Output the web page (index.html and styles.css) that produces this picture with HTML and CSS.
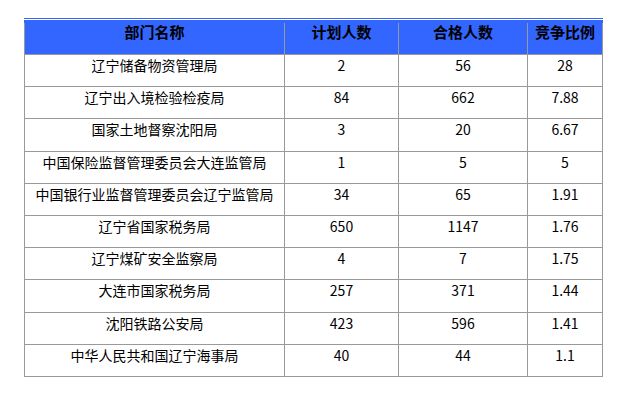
FILE: index.html
```html
<!DOCTYPE html>
<html lang="zh-CN">
<head>
<meta charset="utf-8">
<title>竞争比例</title>
<link rel="stylesheet" href="styles.css">
</head>
<body>
<div class="table">
  <div class="head">
    <div class="cell">部门名称</div>
    <div class="cell">计划人数</div>
    <div class="cell">合格人数</div>
    <div class="cell last">竞争比例</div>
  </div>
  <div class="row"><div class="cell">辽宁储备物资管理局</div><div class="cell">2</div><div class="cell">56</div><div class="cell last">28</div></div>
  <div class="row"><div class="cell">辽宁出入境检验检疫局</div><div class="cell">84</div><div class="cell">662</div><div class="cell last">7.88</div></div>
  <div class="row"><div class="cell">国家土地督察沈阳局</div><div class="cell">3</div><div class="cell">20</div><div class="cell last">6.67</div></div>
  <div class="row"><div class="cell">中国保险监督管理委员会大连监管局</div><div class="cell">1</div><div class="cell">5</div><div class="cell last">5</div></div>
  <div class="row"><div class="cell">中国银行业监督管理委员会辽宁监管局</div><div class="cell">34</div><div class="cell">65</div><div class="cell last">1.91</div></div>
  <div class="row"><div class="cell">辽宁省国家税务局</div><div class="cell">650</div><div class="cell">1147</div><div class="cell last">1.76</div></div>
  <div class="row"><div class="cell">辽宁煤矿安全监察局</div><div class="cell">4</div><div class="cell">7</div><div class="cell last">1.75</div></div>
  <div class="row"><div class="cell">大连市国家税务局</div><div class="cell">257</div><div class="cell">371</div><div class="cell last">1.44</div></div>
  <div class="row"><div class="cell">沈阳铁路公安局</div><div class="cell">423</div><div class="cell">596</div><div class="cell last">1.41</div></div>
  <div class="row"><div class="cell">中华人民共和国辽宁海事局</div><div class="cell">40</div><div class="cell">44</div><div class="cell last">1.1</div></div>
</div>
</body>
</html>
```
FILE: styles.css
```css
html, body {
  margin: 0;
  padding: 0;
  background: #ffffff;
}
body {
  padding: 18px 0 0 24px;
  font-family: "Noto Sans CJK SC", "Noto Sans", sans-serif;
  color: #000;
}
.table {
  width: 579px;
  border-top: 1px solid #3366ff;
}
.head,
.row {
  display: grid;
  grid-template-columns: 260px 114px 129px 76px;
  box-sizing: border-box;
}
.head {
  margin-top: 1px;
  padding-top: 3px;
  background: #3366ff;
  border-bottom: 1px solid #999999;
  height: 35px;
}
.row {
  height: 32.2px;
  border-bottom: 1px solid #999999;
}
.cell {
  box-sizing: border-box;
  border-left: 1px solid #999999;
  text-align: center;
  line-height: 20px;
  font-size: 14px;
  white-space: nowrap;
}
.cell.last {
  border-right: 1px solid #999999;
}
.head .cell {
  font-size: 15px;
  font-weight: bold;
  line-height: 18px;
}
```
